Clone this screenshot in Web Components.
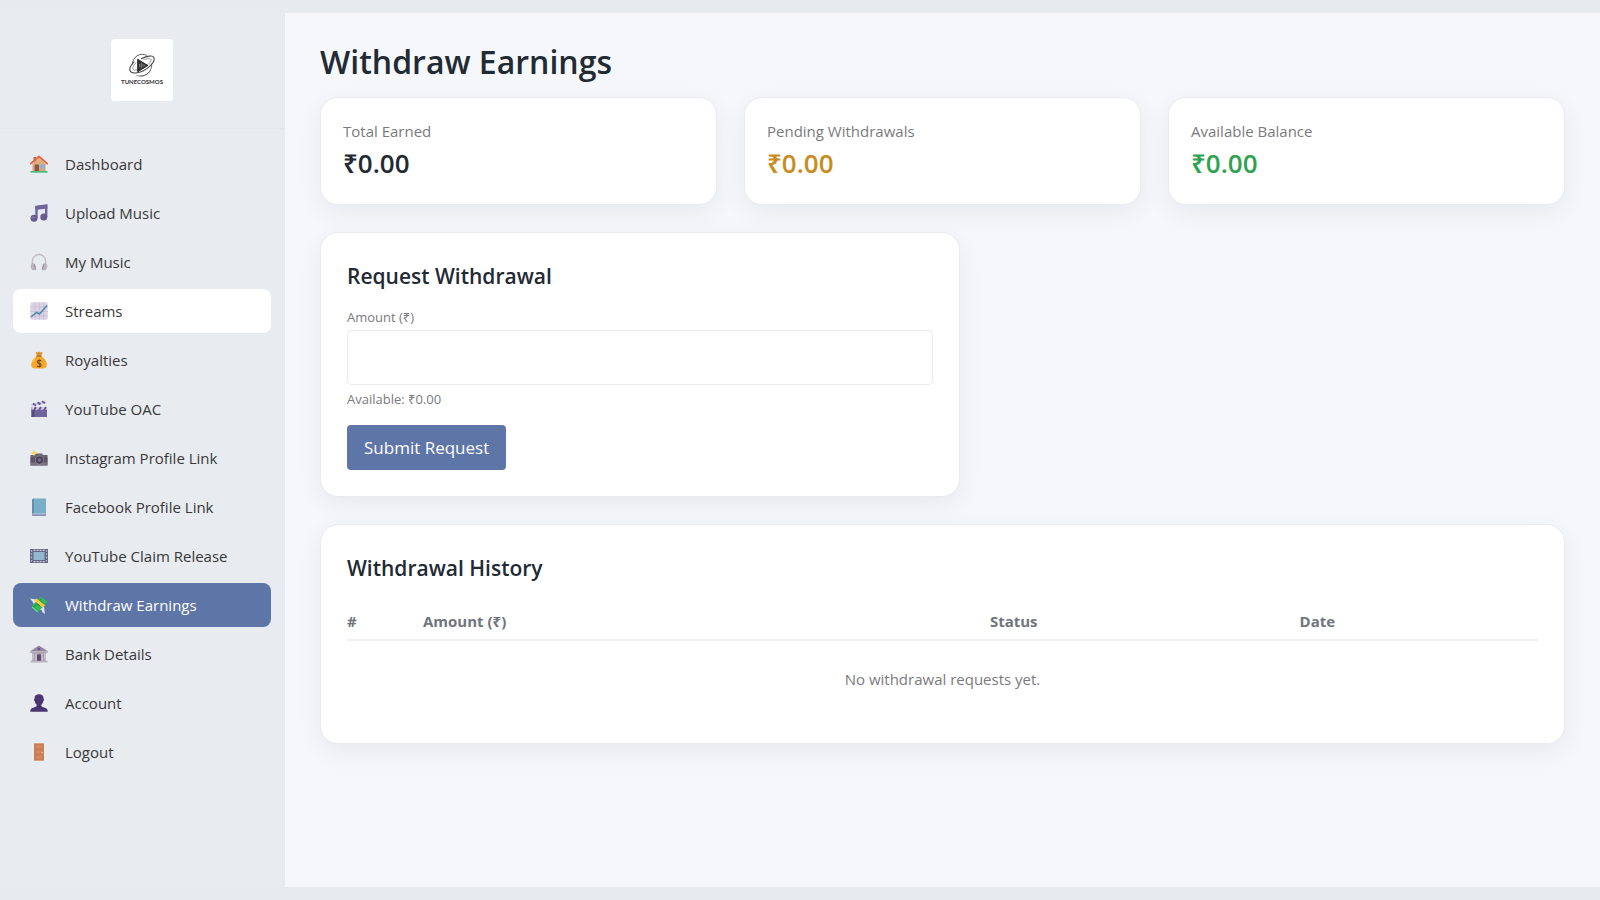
<!DOCTYPE html>
<html lang="en">
<head>
<meta charset="utf-8">
<meta name="viewport" content="width=device-width, initial-scale=1">
<title>Withdraw Earnings</title>
<style>
	:root {
		--tc-frame: #e7eaee;
		--tc-sidebar: #e8ebf0;
		--tc-page: #f6f7fb;
		--tc-primary: #5e75a7;
		--tc-ink: #222a33;
		--tc-text: #383838;
		--tc-muted: #7a7b7e;
		--tc-line: #e9ebee;
		--tc-gap: 27px;
	}

	body {
		margin: 0;
		background: var(--tc-frame);
		color: var(--tc-text);
		font-family: "Open Sans", "Noto Sans", sans-serif;
		font-size: 15px;
		line-height: 20px;
	}
</style>
</head>
<body>
<tc-app>
	<tc-sidebar slot="sidebar">
		<tc-nav-item icon="home">Dashboard</tc-nav-item>
		<tc-nav-item icon="note">Upload Music</tc-nav-item>
		<tc-nav-item icon="headphones">My Music</tc-nav-item>
		<tc-nav-item icon="chart" highlighted>Streams</tc-nav-item>
		<tc-nav-item icon="moneybag">Royalties</tc-nav-item>
		<tc-nav-item icon="clapper">YouTube OAC</tc-nav-item>
		<tc-nav-item icon="camera">Instagram Profile Link</tc-nav-item>
		<tc-nav-item icon="book">Facebook Profile Link</tc-nav-item>
		<tc-nav-item icon="film">YouTube Claim Release</tc-nav-item>
		<tc-nav-item icon="cash" active>Withdraw Earnings</tc-nav-item>
		<tc-nav-item icon="bank">Bank Details</tc-nav-item>
		<tc-nav-item icon="user">Account</tc-nav-item>
		<tc-nav-item icon="door">Logout</tc-nav-item>
	</tc-sidebar>
	<tc-withdraw-page></tc-withdraw-page>
</tc-app>

<script>
const icons = {
	home: `
		<path d="M2.5 8h13v9h-13z" fill="#d9a577"/>
		<path d="M3.5 2h2.500v5H3.500z" fill="#b36a4d"/>
		<path d="M3 8l6-5.500L15 8v3H3z" fill="#dfae80"/>
		<path d="M.8 8.600L9 1.400l8.200 7.200" fill="none" stroke="#e9603f" stroke-width="1.800" stroke-linecap="round" stroke-linejoin="round"/>
		<path d="M4.700 9.500h4.300v7H4.700z" fill="#8a5548"/>
		<path d="M10.500 9.500h4v4h-4z" fill="#7fb5dd"/>
		<path d="M.5 16h17v1.700H.5z" fill="#3fbf7a"/>`,
	note: `
		<path d="M6.500 14V3.300l9.700-1.200v11" fill="none" stroke="#70659a" stroke-width="2.400"/>
		<path d="M5.300 1.700L17.400.3v4.200L5.300 6z" fill="#70659a"/>
		<circle cx="4" cy="14.200" r="3.500" fill="#675b92"/>
		<circle cx="13.800" cy="12.900" r="3.500" fill="#675b92"/>
		<circle cx="3.300" cy="13.600" r="1.400" fill="#7d72a5"/>`,
	headphones: `
		<path d="M2.300 11V8.300a6.700 6.700 0 0 1 13.400 0V11" fill="none" stroke="#c2bdc6" stroke-width="1.500"/>
		<path d="M1.300 11c2-1.400 3.400-1 4 .8l.9 4.200c-.3 1.400-3 1.800-4.300.7C.5 15 .3 12.600 1.300 11z" fill="#bbb5c1"/>
		<path d="M16.700 11c-2-1.400-3.400-1-4 .8l-.9 4.200c.3 1.400 3 1.800 4.300.7 1.400-1.700 1.600-4.100.6-5.700z" fill="#bbb5c1"/>
		<path d="M4.300 11.400l1.400 5M13.700 11.400l-1.400 5" stroke="#918996" stroke-width="1"/>`,
	chart: `
		<rect x=".3" y=".3" width="17.400" height="17.400" rx="2" fill="#ddd3e6"/>
		<path d="M5 .3v17.400M9.300 .3v17.400M13.600 .3v17.400M.3 5h17.400M.3 9.500h17.400M.3 14h17.400" stroke="#c6b9d4" stroke-width=".7"/>
		<path d="M1 15l5.500-4.500L9.500 12 17 3.500" fill="none" stroke="#4788a9" stroke-width="1.500"/>`,
	moneybag: `
		<path d="M5.500.8l2 .7L9 .5l1.600 1 2-.5-1.500 4H7z" fill="#d9922c"/>
		<path d="M6.700 5h4.700c3.800 3 5.600 6 5.400 9-.2 2.700-1.800 3.500-4 3.500H5.300c-2.500 0-4-1-4.100-3.500C1 11 3 8 6.700 5z" fill="#f5a62b"/>
		<path d="M2 10c1-2 2.500-3.500 4-4.500-.5 3-2 5-4.200 6z" fill="#ffc83d"/>
		<path d="M6.500 5h5" stroke="#b86d21" stroke-width="1.300"/>
		<text x="9" y="15.500" text-anchor="middle" font-size="10" font-weight="600" fill="#6d4a2b">$</text>`,
	clapper: `
		<path d="M1.500 7.500h15.500V17H1.500z" fill="#6d639d"/>
		<path d="M1.500 7.500h3V17h-3z" fill="#594a82"/>
		<path d="M1 4l14.500-3.500.8 2.700L1.700 6.700z" fill="#d7d0e4"/>
		<path d="M3 3.500l3 2M7.500 2.400l3 2M12 1.300l3 2" stroke="#675790" stroke-width="1.900"/>
		<path d="M1.500 7h15.500v2.700H1.500z" fill="#d7d0e4"/>
		<path d="M4 10l2-3M9 10l2-3M14 10l2-3" stroke="#675790" stroke-width="2"/>`,
	camera: `
		<path d="M1 6h4l1-1.500h6L13 6h4.500v10.500H.5V6z" fill="#686370"/>
		<path d="M.5 8.500h17v5H.5z" fill="#5c5664"/>
		<path d="M.5 13.700h17v2.800H.5z" fill="#797381"/>
		<circle cx="9.500" cy="11" r="4.600" fill="#8f8998"/>
		<circle cx="9.500" cy="11" r="3.800" fill="#494151"/>
		<circle cx="9.500" cy="11" r="1.800" fill="#77718b"/>
		<path d="M4 .5l1.100 2.400L7.500 4 5.100 5.100 4 7.500 2.900 5.100.5 4l2.400-1.100z" fill="#f7d55b"/>`,
	book: `
		<path d="M2 1.500L3.500.5H16v17H3.500L2 16.500z" fill="#78aec8"/>
		<path d="M2 1.500l2-1v15l-2 1z" fill="#5b93b1"/>
		<path d="M2.300 16h13.200" stroke="#c9cfe0" stroke-width="1"/>
		<path d="M2 17.200h14" stroke="#79719f" stroke-width="1"/>`,
	film: `
		<path d="M0 2h18v14H0z" fill="#6a6382"/>
		<path d="M3.500 5h11v8h-11z" fill="#91b8cf"/>
		<path d="M3.500 3.400h11M3.500 14.600h11" stroke="#bdd2df" stroke-width="1.300" stroke-dasharray="2 1"/>
		<path d="M1.500 3v12M16.500 3v12" stroke="#9cb9ce" stroke-width="1.300" stroke-dasharray="1.800 1.500"/>`,
	cash: `
		<path d="M0 2.500l6 1 2 5-3-2-1 2-1.500-3z" fill="#e4e5f0"/>
		<path d="M9 13l5-3 1 8-2.500-1.500-.5-2z" fill="#dddeea"/>
		<path d="M1.500 10.500L11 .8l6.500 5-9.700 10.500z" fill="#31b85b"/>
		<path d="M3 11.500L12 2.300" stroke="#17913e" stroke-width="1"/>
		<circle cx="10" cy="7.800" r="2.500" fill="#138b40"/>
		<path d="M4.300 4.500l2.500-2L15 9.500l-2.500 2.300z" fill="#f3c940"/>
		<path d="M2 11l5.800 5" stroke="#65db7d" stroke-width="1.200"/>`,
	bank: `
		<path d="M9 .5L17.500 6v2H.5V6z" fill="#92889b"/>
		<path d="M2 8h14v8H2z" fill="#a69cad"/>
		<path d="M3 8.500v7M6 8.500v7M12 8.500v7M15 8.500v7" stroke="#cfc8d5" stroke-width="1.500"/>
		<path d="M7 9.500h4V16H7z" fill="#594c65"/>
		<path d="M.5 6.800h17M.5 16.700h17" stroke="#bbb3c2" stroke-width="1.700"/>
		<circle cx="9" cy="4" r="1.300" fill="#6e549e"/>`,
	user: `
		<path d="M4.500 4.500C4.500 1.700 6.300.3 9 .3s4.700 1.500 4.600 4.300c.8 1.300.2 2.400-.4 2.700-.4 1.700-1 2.800-2 3.700v1.200l4.800 2c1.300.6 1.700 1.800 1.700 3.500H.3c0-1.700.4-2.900 1.700-3.500l4.800-2V11c-1-.9-1.600-2-2-3.700-.7-.4-1.100-1.400-.3-2.800z" fill="#49356f"/>
		<path d="M6.800 12.200c1.300 1 3.100 1 4.400 0" fill="none" stroke="#36255a" stroke-width="1"/>`,
	door: `
		<path d="M4 .3h10v17.400H4z" fill="#ca8057"/>
		<path d="M5.500 2h7v3.500h-7zM5.500 7.200h7v3.600h-7zM5.500 12.500h7v3.500h-7z" fill="#d48a62" stroke="#c0724c" stroke-width=".5"/>
		<circle cx="12.300" cy="9.500" r=".8" fill="#f4bc73"/>`
};

class TCApp extends HTMLElement {
	constructor() {
		super();
		this.attachShadow({ mode: 'open' });
	}

	connectedCallback() {
		this.shadowRoot.innerHTML = `
		<style>
			:host {
				display: flex;
				box-sizing: border-box;
				min-height: 100vh;
				padding: 13px 0;
			}

			main {
				flex: 1;
				min-width: 0;
				padding: 25px 35px 36px;
				background: var(--tc-page);
			}
		</style>
		<slot name="sidebar"></slot>
		<main><slot></slot></main>
		`;
	}
}

customElements.define('tc-app', TCApp);

class TCLogo extends HTMLElement {
	constructor() {
		super();
		this.attachShadow({ mode: 'open' });
	}

	connectedCallback() {
		this.shadowRoot.innerHTML = `
		<style>
			:host {
				display: flex;
				flex-direction: column;
				align-items: center;
				justify-content: center;
				width: 62px;
				height: 60px;
				padding-bottom: 2px;
				border-radius: 4px;
				background: #fff;
				color: #333;
				font: 700 6px/7px Lato, sans-serif;
			}

			svg {
				width: 28px;
				height: 25px;
			}
		</style>
		<svg viewBox="0 0 28 26" fill="none" stroke="#555" aria-hidden="true">
			<path d="M4 12C4 4 12-1 19 2.500" stroke-width="1"/>
			<path d="M24 11c1 7-5 13.500-12.500 13" stroke-width=".9"/>
			<path d="M6 9C-2 17 1 22 9 20.500 18 19 28 10 26.500 5 25.500 1.500 18 3.500 13 6" stroke="#444" stroke-width="1.100"/>
			<path d="M8 10c-5 5-5 8.500 1 7.500C16 16 24 10 23.500 7c-.5-2-5-1-8 0" stroke-width=".6"/>
			<path d="M8 23c5 2.500 13 0 15-5" stroke-width=".6"/>
			<path d="M9.500 6.500v13L20 13z" fill="#333" stroke="#222" stroke-width="1"/>
			<path d="M11.500 11.500v3M13.200 10v6M15 11.500v3M16.700 12.300v1.500" stroke="#aaa" stroke-width=".7"/>
		</svg>
		<span>TUNECOSMOS</span>
		`;
	}
}

customElements.define('tc-logo', TCLogo);

class TCSidebar extends HTMLElement {
	constructor() {
		super();
		this.attachShadow({ mode: 'open' });
	}

	connectedCallback() {
		this.shadowRoot.innerHTML = `
		<style>
			:host {
				display: block;
				box-sizing: border-box;
				flex: 0 0 285px;
				border-right: 1px solid #e6e9ee;
				background: var(--tc-sidebar);
			}

			header {
				display: flex;
				justify-content: center;
				padding: 26px 0 27px;
				border-bottom: 1px solid #e3e6eb;
			}

			nav {
				display: flex;
				flex-direction: column;
				gap: 5px;
				padding: 13px;
			}
		</style>
		<header><tc-logo></tc-logo></header>
		<nav><slot></slot></nav>
		`;
	}
}

customElements.define('tc-sidebar', TCSidebar);

class TCNavItem extends HTMLElement {
	constructor() {
		super();
		this.attachShadow({ mode: 'open' });
	}

	connectedCallback() {
		const icon = icons[this.getAttribute('icon')] || '';
		this.shadowRoot.innerHTML = `
		<style>
			:host {
				display: block;
			}

			a {
				display: flex;
				align-items: center;
				gap: 17px;
				height: 44px;
				padding: 0 17px;
				border-radius: 8px;
				color: inherit;
				text-decoration: none;
			}

			a:hover,
			:host([highlighted]) a {
				background: #fff;
			}

			:host([active]) a {
				background: var(--tc-primary);
				color: #fff;
			}

			svg {
				flex: none;
				width: 18px;
				height: 18px;
			}
		</style>
		<a href="#" ${this.hasAttribute('active') ? 'aria-current="page"' : ''}>
			<svg viewBox="0 0 18 18" aria-hidden="true">${icon}</svg>
			<slot></slot>
		</a>
		`;
	}
}

customElements.define('tc-nav-item', TCNavItem);

class TCCard extends HTMLElement {
	constructor() {
		super();
		this.attachShadow({ mode: 'open' });
	}

	connectedCallback() {
		this.shadowRoot.innerHTML = `
		<style>
			:host {
				display: block;
				box-sizing: border-box;
				padding: 26px;
				border: 1px solid var(--tc-line);
				border-radius: 18px;
				background: #fff;
				box-shadow: 0 8px 26px rgba(20, 25, 40, 0.06);
			}

			h2 {
				margin: 0;
				color: var(--tc-ink);
				font-size: 21px;
				font-weight: 600;
				line-height: 34px;
			}
		</style>
		<h2>${this.getAttribute('heading')}</h2>
		<slot></slot>
		`;
	}
}

customElements.define('tc-card', TCCard);

class TCStat extends HTMLElement {
	constructor() {
		super();
		this.attachShadow({ mode: 'open' });
	}

	connectedCallback() {
		this.shadowRoot.innerHTML = `
		<style>
			:host {
				display: block;
				box-sizing: border-box;
				padding: 23px 22px;
				border: 1px solid var(--tc-line);
				border-radius: 18px;
				background: #fff;
				box-shadow: 0 8px 26px rgba(20, 25, 40, 0.06);
				color: var(--tc-ink);
			}

			:host([tone="pending"]) {
				color: #c88c22;
			}

			:host([tone="available"]) {
				color: #2fa351;
			}

			.label {
				color: var(--tc-muted);
			}

			.value {
				margin-top: 4px;
				font-size: 26px;
				font-weight: 600;
				line-height: 36px;
			}
		</style>
		<div class="label">${this.getAttribute('label')}</div>
		<div class="value"><slot></slot></div>
		`;
	}
}

customElements.define('tc-stat', TCStat);

class TCWithdrawForm extends HTMLElement {
	constructor() {
		super();
		this.attachShadow({ mode: 'open' });
	}

	connectedCallback() {
		this.shadowRoot.innerHTML = `
		<style>
			:host {
				display: block;
				margin-top: 14px;
				color: var(--tc-muted);
				font-size: 13px;
			}

			form {
				display: flex;
				flex-direction: column;
				align-items: flex-start;
			}

			input {
				box-sizing: border-box;
				width: 100%;
				height: 55px;
				margin: 3px 0 4px;
				padding: 0 16px;
				border: 1px solid var(--tc-line);
				border-radius: 4px;
				background: #fff;
				font: inherit;
			}

			button {
				height: 45px;
				margin-top: 16px;
				padding: 0 17px;
				border: none;
				border-radius: 4px;
				background: var(--tc-primary);
				color: #fff;
				font: inherit;
				font-size: 17px;
			}
		</style>
		<form>
			<label for="amount">Amount (₹)</label>
			<input id="amount" name="amount" type="text" inputmode="decimal" aria-describedby="available">
			<div id="available">Available: ₹0.00</div>
			<button type="button">Submit Request</button>
		</form>
		`;
	}
}

customElements.define('tc-withdraw-form', TCWithdrawForm);

class TCWithdrawHistory extends HTMLElement {
	constructor() {
		super();
		this.attachShadow({ mode: 'open' });
	}

	connectedCallback() {
		this.shadowRoot.innerHTML = `
		<style>
			:host {
				display: block;
				margin-top: 14px;
				color: var(--tc-muted);
			}

			table {
				width: 100%;
				border-collapse: collapse;
				table-layout: fixed;
			}

			th {
				padding: 12px 0 8px;
				border-bottom: 2px solid #f0f1f3;
				color: #70747c;
				font-weight: 700;
				text-align: left;
			}

			.index {
				width: 76px;
			}

			.amount {
				width: 47.6%;
			}

			.status {
				width: 26%;
			}

			td {
				padding: 28px 0;
				text-align: center;
			}
		</style>
		<table>
			<thead>
				<tr>
					<th class="index" scope="col">#</th>
					<th class="amount" scope="col">Amount (₹)</th>
					<th class="status" scope="col">Status</th>
					<th scope="col">Date</th>
				</tr>
			</thead>
			<tbody>
				<tr><td colspan="4">No withdrawal requests yet.</td></tr>
			</tbody>
		</table>
		`;
	}
}

customElements.define('tc-withdraw-history', TCWithdrawHistory);

class TCWithdrawPage extends HTMLElement {
	constructor() {
		super();
		this.attachShadow({ mode: 'open' });
	}

	connectedCallback() {
		this.shadowRoot.innerHTML = `
		<style>
			:host {
				display: flex;
				flex-direction: column;
				gap: var(--tc-gap);
			}

			h1 {
				margin: 0 0 12px;
				color: var(--tc-ink);
				font-size: 32px;
				font-weight: 600;
				line-height: 47px;
			}

			.stats {
				display: grid;
				grid-template-columns: repeat(3, 1fr);
				gap: var(--tc-gap);
			}

			.request {
				width: 100%;
				max-width: 640px;
			}
		</style>
		<section>
			<h1>Withdraw Earnings</h1>
			<div class="stats">
				<tc-stat label="Total Earned">₹0.00</tc-stat>
				<tc-stat label="Pending Withdrawals" tone="pending">₹0.00</tc-stat>
				<tc-stat label="Available Balance" tone="available">₹0.00</tc-stat>
			</div>
		</section>
		<tc-card class="request" heading="Request Withdrawal">
			<tc-withdraw-form></tc-withdraw-form>
		</tc-card>
		<tc-card heading="Withdrawal History">
			<tc-withdraw-history></tc-withdraw-history>
		</tc-card>
		`;
	}
}

customElements.define('tc-withdraw-page', TCWithdrawPage);
</script>
</body>
</html>
